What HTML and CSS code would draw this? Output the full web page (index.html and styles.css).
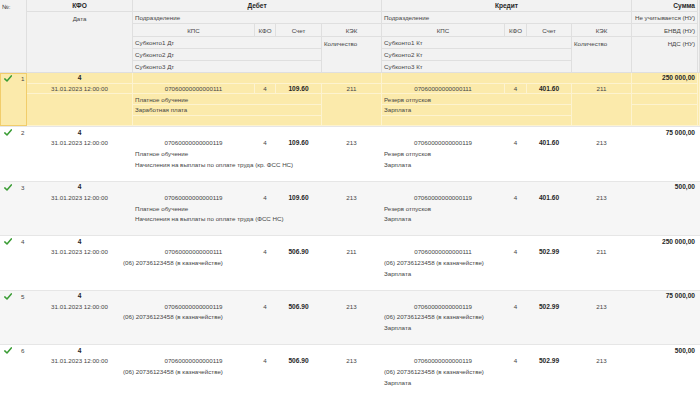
FILE: index.html
```html
<!DOCTYPE html>
<html lang="ru">
<head>
<meta charset="utf-8">
<title>Проводки</title>
<link rel="stylesheet" href="styles.css">
</head>
<body>
<div class="table">
  <div class="grid head">
    <div class="rs6 top">№:</div>
    <div class="c b">КФО</div>
    <div class="cs4 c b">Дебет</div>
    <div class="cs4 c b">Кредит</div>
    <div class="r b">Сумма</div>
    <div class="rs6 edge"></div>

    <div class="rs5 c top">Дата</div>
    <div class="cs4">Подразделение</div>
    <div class="cs4">Подразделение</div>
    <div class="r">Не учитывается (НУ)</div>

    <div class="c">КПС</div><div class="c">КФО</div><div class="c">Счет</div><div class="c">КЭК</div>
    <div class="c">КПС</div><div class="c">КФО</div><div class="c">Счет</div><div class="c">КЭК</div>
    <div class="r">ЕНВД (НУ)</div>

    <div class="cs3">Субконто1 Дт</div>
    <div class="rs3 top">Количество</div>
    <div class="cs3">Субконто1 Кт</div>
    <div class="rs3 top">Количество</div>
    <div class="rs3 r top">НДС (НУ)</div>

    <div class="cs3">Субконто2 Дт</div>
    <div class="cs3">Субконто2 Кт</div>
    <div class="cs3">Субконто3 Дт</div>
    <div class="cs3">Субконто3 Кт</div>
  </div>

  <!-- row 1 -->
  <div class="grid row sel">
    <div class="rs5 num"><svg class="check" viewBox="0 0 8 7"><path d="M0.8 3.9 L3 6 L7.3 0.9"/></svg><span>1</span></div>
    <div class="c b">4</div>
    <div class="cs4"></div>
    <div class="cs4"></div>
    <div class="r b">250 000,00</div>
    <div class="rs5 edge"></div>
    <div class="c">31.01.2023 12:00:00</div>
    <div class="c">07060000000000111</div><div class="c">4</div><div class="c b">109.60</div><div class="c">211</div>
    <div class="c">07060000000000111</div><div class="c">4</div><div class="c b">401.60</div><div class="c">211</div>
    <div></div>
    <div class="rs3"></div>
    <div class="cs3">Платное обучение</div>
    <div class="rs3"></div>
    <div class="cs3">Резерв отпусков</div>
    <div class="rs3"></div>
    <div></div>
    <div class="cs3">Заработная плата</div>
    <div class="cs3">Зарплата</div>
    <div class="rs2"></div>
    <div class="cs3"></div>
    <div class="cs3"></div>
  </div>

  <!-- row 2 -->
  <div class="grid row">
    <div class="rs5 num"><svg class="check" viewBox="0 0 8 7"><path d="M0.8 3.9 L3 6 L7.3 0.9"/></svg><span>2</span></div>
    <div class="c b">4</div>
    <div class="cs4"></div>
    <div class="cs4"></div>
    <div class="r b">75 000,00</div>
    <div class="rs5 edge"></div>
    <div class="c">31.01.2023 12:00:00</div>
    <div class="c">07060000000000119</div><div class="c">4</div><div class="c b">109.60</div><div class="c">213</div>
    <div class="c">07060000000000119</div><div class="c">4</div><div class="c b">401.60</div><div class="c">213</div>
    <div></div>
    <div class="rs3"></div>
    <div class="cs3">Платное обучение</div>
    <div class="rs3"></div>
    <div class="cs3">Резерв отпусков</div>
    <div class="rs3"></div>
    <div></div>
    <div class="cs3">Начисления на выплаты по оплате труда (кр. ФСС НС)</div>
    <div class="cs3">Зарплата</div>
    <div class="rs2"></div>
    <div class="cs3"></div>
    <div class="cs3"></div>
  </div>

  <!-- row 3 -->
  <div class="grid row alt">
    <div class="rs5 num"><svg class="check" viewBox="0 0 8 7"><path d="M0.8 3.9 L3 6 L7.3 0.9"/></svg><span>3</span></div>
    <div class="c b">4</div>
    <div class="cs4"></div>
    <div class="cs4"></div>
    <div class="r b">500,00</div>
    <div class="rs5 edge"></div>
    <div class="c">31.01.2023 12:00:00</div>
    <div class="c">07060000000000119</div><div class="c">4</div><div class="c b">109.60</div><div class="c">213</div>
    <div class="c">07060000000000119</div><div class="c">4</div><div class="c b">401.60</div><div class="c">213</div>
    <div></div>
    <div class="rs3"></div>
    <div class="cs3">Платное обучение</div>
    <div class="rs3"></div>
    <div class="cs3">Резерв отпусков</div>
    <div class="rs3"></div>
    <div></div>
    <div class="cs3">Начисления на выплаты по оплате труда (ФСС НС)</div>
    <div class="cs3">Зарплата</div>
    <div class="rs2"></div>
    <div class="cs3"></div>
    <div class="cs3"></div>
  </div>

  <!-- row 4 -->
  <div class="grid row">
    <div class="rs5 num"><svg class="check" viewBox="0 0 8 7"><path d="M0.8 3.9 L3 6 L7.3 0.9"/></svg><span>4</span></div>
    <div class="c b">4</div>
    <div class="cs4"></div>
    <div class="cs4"></div>
    <div class="r b">250 000,00</div>
    <div class="rs5 edge"></div>
    <div class="c">31.01.2023 12:00:00</div>
    <div class="c">07060000000000111</div><div class="c">4</div><div class="c b">506.90</div><div class="c">211</div>
    <div class="c">07060000000000111</div><div class="c">4</div><div class="c b">502.99</div><div class="c">211</div>
    <div></div>
    <div class="rs3"></div>
    <div class="cs3 shift">(06) 20736123458 (в казначействе)</div>
    <div class="rs3"></div>
    <div class="cs3">(06) 20736123458 (в казначействе)</div>
    <div class="rs3"></div>
    <div></div>
    <div class="cs3"></div>
    <div class="cs3">Зарплата</div>
    <div class="rs2"></div>
    <div class="cs3"></div>
    <div class="cs3"></div>
  </div>

  <!-- row 5 -->
  <div class="grid row alt">
    <div class="rs5 num"><svg class="check" viewBox="0 0 8 7"><path d="M0.8 3.9 L3 6 L7.3 0.9"/></svg><span>5</span></div>
    <div class="c b">4</div>
    <div class="cs4"></div>
    <div class="cs4"></div>
    <div class="r b">75 000,00</div>
    <div class="rs5 edge"></div>
    <div class="c">31.01.2023 12:00:00</div>
    <div class="c">07060000000000119</div><div class="c">4</div><div class="c b">506.90</div><div class="c">213</div>
    <div class="c">07060000000000119</div><div class="c">4</div><div class="c b">502.99</div><div class="c">213</div>
    <div></div>
    <div class="rs3"></div>
    <div class="cs3 shift">(06) 20736123458 (в казначействе)</div>
    <div class="rs3"></div>
    <div class="cs3">(06) 20736123458 (в казначействе)</div>
    <div class="rs3"></div>
    <div></div>
    <div class="cs3"></div>
    <div class="cs3">Зарплата</div>
    <div class="rs2"></div>
    <div class="cs3"></div>
    <div class="cs3"></div>
  </div>

  <!-- row 6 -->
  <div class="grid row">
    <div class="rs5 num"><svg class="check" viewBox="0 0 8 7"><path d="M0.8 3.9 L3 6 L7.3 0.9"/></svg><span>6</span></div>
    <div class="c b">4</div>
    <div class="cs4"></div>
    <div class="cs4"></div>
    <div class="r b">500,00</div>
    <div class="rs5 edge"></div>
    <div class="c">31.01.2023 12:00:00</div>
    <div class="c">07060000000000119</div><div class="c">4</div><div class="c b">506.90</div><div class="c">213</div>
    <div class="c">07060000000000119</div><div class="c">4</div><div class="c b">502.99</div><div class="c">213</div>
    <div></div>
    <div class="rs3"></div>
    <div class="cs3 shift">(06) 20736123458 (в казначействе)</div>
    <div class="rs3"></div>
    <div class="cs3">(06) 20736123458 (в казначействе)</div>
    <div class="rs3"></div>
    <div></div>
    <div class="cs3"></div>
    <div class="cs3">Зарплата</div>
    <div class="rs2"></div>
    <div class="cs3"></div>
    <div class="cs3"></div>
  </div>
</div>
</body>
</html>
```

FILE: styles.css
```css
html, body {
  margin: 0;
  padding: 0;
}
body {
  width: 700px;
  height: 399px;
  overflow: hidden;
  background: #ffffff;
  font-family: "Liberation Sans", Arial, sans-serif;
  font-size: 6.2px;
  color: #454545;
}
.table {
  width: 700px;
}
.grid {
  display: grid;
  grid-template-columns: 27px 106px 122px 21px 46px 60px 123px 22px 45px 60px 66px 2px;
}
.grid > * {
  display: flex;
  align-items: center;
  padding: 0 2px;
  white-space: nowrap;
  overflow: hidden;
  min-width: 0;
  box-sizing: border-box;
}
.head {
  grid-template-rows: 12px 12px 13px 12px 12px 12px;
  background: #f2f2f2;
}
.head > div {
  border-right: 1px solid #dfdfdf;
  border-bottom: 1px solid #dfdfdf;
}
.row {
  grid-template-rows: repeat(5, 10.7px);
  border-bottom: 1px solid #e6e6e6;
  background: #ffffff;
}
.row > div {
  border-right: 1px solid transparent;
  border-bottom: 1px solid transparent;
}
.row.alt {
  background: #f6f6f6;
}
.row.sel {
  background: #fbeaab;
}
.row.sel > div {
  border-color: #fdf3cf;
}
.row.sel > .num {
  border: 1px solid #f1cd6b;
}
.c { justify-content: center; }
.r { justify-content: flex-end; }
.top { align-items: flex-start; padding-top: 3px; }
.b {
  font-weight: bold;
  color: #262626;
  font-size: 6.6px;
}
.cs3 { grid-column: span 3; }
.cs4 { grid-column: span 4; }
.rs2 { grid-row: span 2; }
.rs3 { grid-row: span 3; }
.rs5 { grid-row: span 5; }
.rs6 { grid-row: span 6; }
.edge { padding: 0; }
.shift {
  overflow: visible;
  text-indent: -12px;
}
.num {
  align-items: flex-start;
  padding: 1px 0 0 4px;
}
.row.sel > .num {
  padding: 0 0 0 3px;
}
.num span {
  margin-left: 9px;
  margin-top: 1px;
}
.check {
  width: 8px;
  height: 7px;
  flex: none;
  margin-top: 1px;
}
.check path {
  fill: none;
  stroke: #3a9c34;
  stroke-width: 1.5;
  stroke-linecap: round;
  stroke-linejoin: round;
}
```
